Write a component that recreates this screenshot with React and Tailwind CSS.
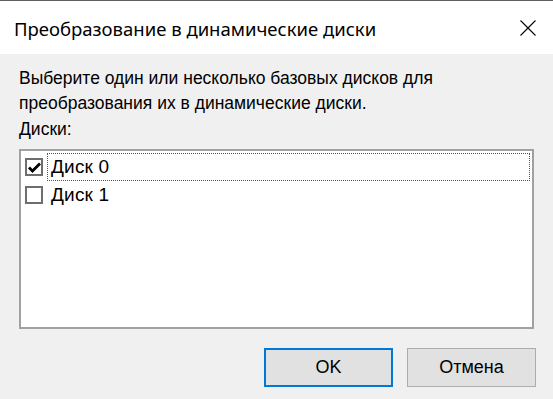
const disks = [
  { id: 0, name: 'Диск 0', checked: true },
  { id: 1, name: 'Диск 1', checked: false },
]

const CheckBox = ({ checked }) => (
  <div className="w-[18px] h-[18px] border-2 border-[#6e6e6e] bg-white flex items-center justify-center">
    {checked && (
      <svg width="13" height="11" viewBox="0 0 13 11">
        <path d="M1 5.5 L4.5 9 L12 1.5" fill="none" stroke="#000" strokeWidth="2.8" />
      </svg>
    )}
  </div>
)

const App = () => {
  return (
    <div className="w-[553px] h-[399px] flex flex-col bg-[#f0f0f0] border-t border-[#5f5f5f] overflow-hidden" style={{ fontFamily: '"Liberation Sans", Arial, sans-serif' }}>
      <div className="h-[53px] bg-white flex items-center justify-between pl-[14px] pr-[17px] shrink-0">
        <h1 className="text-[18.5px] text-black pt-[3px]" style={{ fontFamily: '"Noto Sans", sans-serif' }}>
          Преобразование в динамические диски
        </h1>
        <svg width="16" height="16" viewBox="0 0 16 16" className="mt-[1px]">
          <path d="M0.5 0.5 L15.5 15.5 M15.5 0.5 L0.5 15.5" stroke="#000" strokeWidth="1.1" />
        </svg>
      </div>

      <div className="flex-1 flex flex-col px-[19px] pt-[12px]">
        <p className="text-[17.5px] leading-[25px] text-black">
          Выберите один или несколько базовых дисков для<br />
          преобразования их в динамические диски.
        </p>
        <p className="text-[17.5px] leading-[25px] text-black mt-[1px]">Диски:</p>

        <div className="mt-[7px] h-[180px] shrink-0 border-2 border-[#a0a1a5] bg-white pt-[2px] pl-[4px] pr-[2px]">
          {disks.map(d => (
            <div key={d.id} className="h-[28px] flex items-center gap-[4px]">
              <CheckBox checked={d.checked} />
              <div className={`flex-1 h-full flex items-center pl-[3px] text-[19px] tracking-[0.2px] text-black ${d.id === 0 ? 'border border-dotted border-[#555]' : 'border border-transparent'}`}>
                {d.name}
              </div>
            </div>
          ))}
        </div>

        <div className="flex justify-end gap-[14px] mt-[19px] mr-[-2px]">
          <button className="w-[129px] h-[39px] bg-[#e1e1e1] border-2 border-[#0078d7] text-[18px] text-black">
            OK
          </button>
          <button className="w-[129px] h-[39px] bg-[#e1e1e1] border border-[#adadad] text-[18px] text-black">
            Отмена
          </button>
        </div>
      </div>
    </div>
  )
}

export default App
